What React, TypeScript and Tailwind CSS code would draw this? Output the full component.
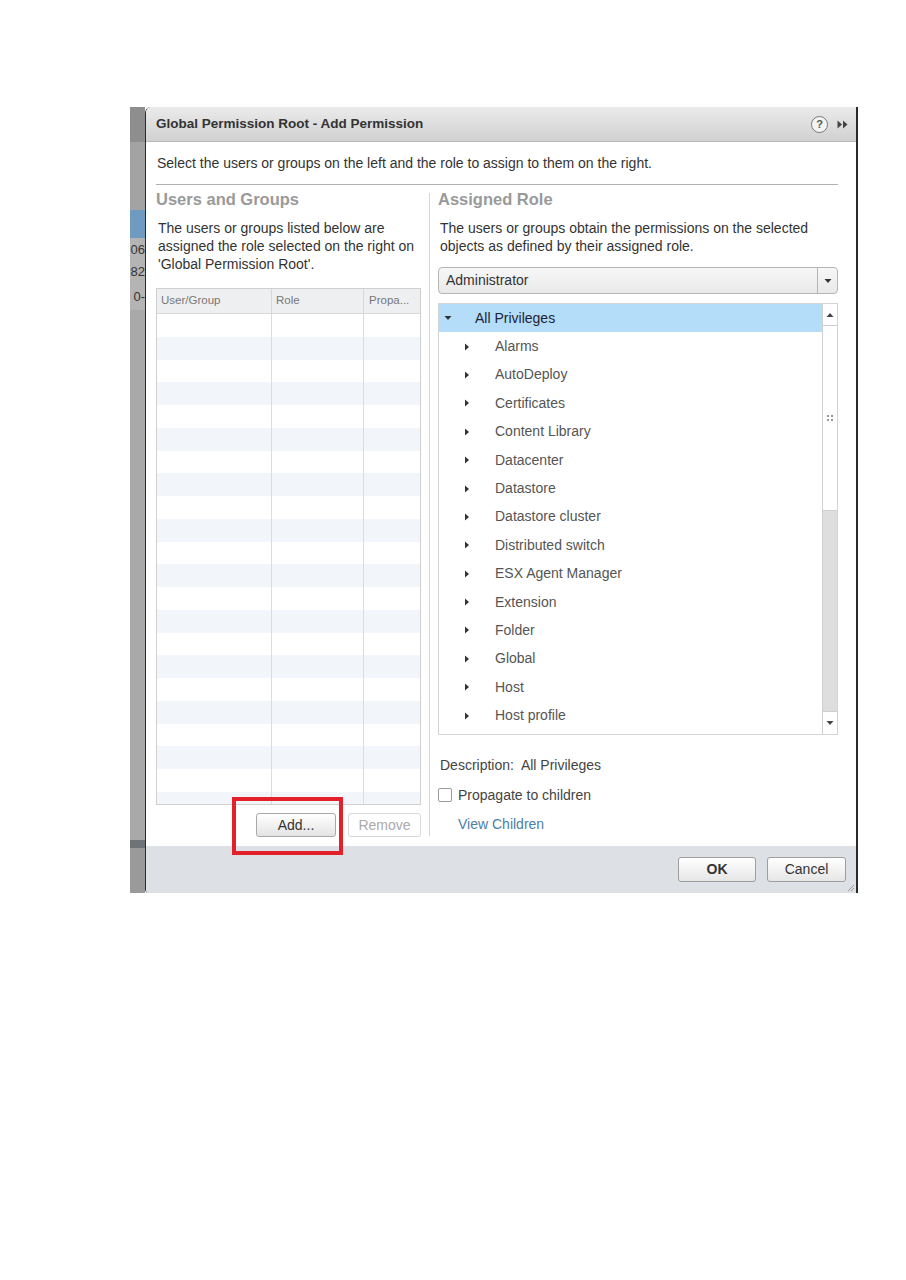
import React from 'react';

const PRIVILEGES = [
  'Alarms', 'AutoDeploy', 'Certificates', 'Content Library', 'Datacenter', 'Datastore',
  'Datastore cluster', 'Distributed switch', 'ESX Agent Manager', 'Extension', 'Folder',
  'Global', 'Host', 'Host profile',
];

function TriRight() {
  return (
    <svg width="6" height="8" viewBox="0 0 6 8" className="shrink-0">
      <path d="M1 0.5 L5 4 L1 7.5 Z" fill="#333" />
    </svg>
  );
}

function TriDown({ color = '#333' }: { color?: string }) {
  return (
    <svg width="8" height="6" viewBox="0 0 8 6" className="shrink-0">
      <path d="M0.5 1 L7.5 1 L4 5 Z" fill={color} />
    </svg>
  );
}

function TriUp() {
  return (
    <svg width="8" height="6" viewBox="0 0 8 6" className="shrink-0">
      <path d="M0.5 5 L7.5 5 L4 1 Z" fill="#444" />
    </svg>
  );
}

export default function App() {
  const rows = Array.from({ length: 22 });

  return (
    <div className="w-[906px] h-[1280px] bg-white font-['Liberation_Sans',Arial,sans-serif] text-[#333] overflow-hidden">
      <div className="ml-[130px] pt-[107px] flex w-[728px]">
        {/* app behind the dialog */}
        <div className="w-[15px] h-[786px] bg-[#a3a3a3] flex flex-col overflow-hidden text-[13px] leading-none text-[#333]">
          <div className="h-[35px] bg-[#8e8e8e]" />
          <div className="h-[68px]" />
          <div className="h-[28px] bg-[#6f9bc0]" />
          <div className="h-[22px] flex items-center justify-end bg-[#b4b4b4]">06</div>
          <div className="h-[22px] flex items-center justify-end bg-[#b4b4b4]">82</div>
          <div className="h-[28px] flex items-center justify-end bg-[#b4b4b4]">0-</div>
          <div className="h-[530px] bg-[#a9a9a9]" />
          <div className="h-[8px] bg-[#6e7378]" />
          <div className="flex-1 bg-[#9a9a9a]" />
        </div>

        {/* dialog */}
        <div className="w-[713px] h-[786px] flex flex-col border-l-[1.5px] border-r-2 border-[#2a2a2a] rounded-tl-[6px] rounded-bl-[4px] overflow-hidden bg-white">
          {/* title bar */}
          <div className="h-[35px] shrink-0 flex items-center pl-[10px] pr-[8px] bg-gradient-to-b from-[#ebebeb] to-[#d1d1d1] border-b border-[#b9b9b9]">
            <span className="text-[13.5px] font-bold text-[#333] flex-1">Global Permission Root - Add Permission</span>
            <span className="w-[17px] h-[17px] rounded-full border border-[#777] flex items-center justify-center text-[11px] font-bold text-[#555] bg-[#f4f4f4]">?</span>
            <span className="ml-[9px] flex items-center">
              <svg width="11" height="9" viewBox="0 0 11 9">
                <path d="M0.5 0.5 L5 4.5 L0.5 8.5 Z" fill="#444" />
                <path d="M6 0.5 L10.5 4.5 L6 8.5 Z" fill="#444" />
              </svg>
            </span>
          </div>

          {/* body */}
          <div className="flex-1 flex flex-col pl-[10px] pr-[18px] text-[14px]">
            <div className="h-[43px] shrink-0 flex items-center pl-[1px] text-[#333] border-b border-[#b0b0b0]">
              Select the users or groups on the left and the role to assign to them on the right.
            </div>

            <div className="flex flex-1">
              {/* left column */}
              <div className="w-[265px] shrink-0 flex flex-col">
                <div className="h-[28px] flex items-center text-[16.5px] font-bold text-[#9a9a9a] leading-none">Users and Groups</div>
                <div className="pt-[6px] leading-[18px] text-[#333] pl-[2px]">
                  The users or groups listed below are<br />
                  assigned the role selected on the right on<br />
                  'Global Permission Root'.
                </div>
                <div className="mt-[15px] h-[517px] border border-[#cfcfcf] flex flex-col overflow-hidden">
                  <div className="h-[25px] shrink-0 flex bg-[#eeeff1] border-b border-[#d8d8d8] text-[11.5px] text-[#777]">
                    <div className="w-[115px] border-r border-[#d8d8d8] flex items-center pl-[4px]">User/Group</div>
                    <div className="w-[92px] border-r border-[#d8d8d8] flex items-center pl-[4px]">Role</div>
                    <div className="flex-1 flex items-center pl-[5px]">Propa...</div>
                  </div>
                  <div className="flex-1 overflow-hidden">
                    {rows.map((_, i) => (
                      <div key={i} className={`h-[22.75px] flex ${i % 2 === 1 ? 'bg-[#f2f5f9]' : 'bg-white'}`}>
                        <div className="w-[115px] border-r border-[#dcdcdc]" />
                        <div className="w-[92px] border-r border-[#dcdcdc]" />
                        <div className="flex-1" />
                      </div>
                    ))}
                  </div>
                </div>
                <div className="mt-[8px] flex justify-end gap-[12px] relative">
                  <button className="w-[80px] h-[24px] rounded-[3px] border border-[#a9a9a9] bg-gradient-to-b from-[#ffffff] to-[#e4e4e4] text-[#333]">Add...</button>
                  <button className="w-[73px] h-[24px] rounded-[3px] border border-[#d9d9d9] bg-white text-[#aaa]">Remove</button>
                  {/* annotation box, drawn over the dialog footer */}
                  <div className="absolute z-10 left-[76px] top-[-16px] w-[111px] h-[58px] border-[4px] border-[#e3212b]" />
                </div>
              </div>

              {/* divider */}
              <div className="w-[17px] shrink-0 flex justify-center pt-[8px] pb-[10px]">
                <div className="w-px bg-[#d6d6d6]" />
              </div>

              {/* right column */}
              <div className="flex-1 flex flex-col">
                <div className="h-[28px] flex items-center text-[16.5px] font-bold text-[#9a9a9a] leading-none">Assigned Role</div>
                <div className="pt-[6px] leading-[18px] text-[#333] pl-[2px]">
                  The users or groups obtain the permissions on the selected<br />
                  objects as defined by their assigned role.
                </div>
                <div className="mt-[12px] h-[27px] flex rounded-[4px] border border-[#b5b5b5] bg-gradient-to-b from-[#f7f7f7] to-[#e9e9e9]">
                  <div className="flex-1 flex items-center pl-[7px] text-[#333]">Administrator</div>
                  <div className="w-[20px] border-l border-[#b5b5b5] flex items-center justify-center">
                    <TriDown />
                  </div>
                </div>

                <div className="mt-[9px] h-[432px] border border-[#d4d4d4] flex overflow-hidden">
                  <div className="flex-1 flex flex-col">
                    <div className="h-[28.4px] shrink-0 flex items-center bg-[#b3ddf8] pl-[5px] text-[#223]">
                      <TriDown />
                      <span className="ml-[23px]">All Privileges</span>
                    </div>
                    {PRIVILEGES.map((p) => (
                      <div key={p} className="h-[28.4px] shrink-0 flex items-center pl-[25px] text-[#555]">
                        <TriRight />
                        <span className="ml-[25px]">{p}</span>
                      </div>
                    ))}
                  </div>
                  {/* scrollbar */}
                  <div className="w-[15px] shrink-0 border-l border-[#cfcfcf] flex flex-col bg-[#f6f6f6]">
                    <div className="h-[22px] flex items-center justify-center border-b border-[#cfcfcf] bg-white">
                      <TriUp />
                    </div>
                    <div className="h-[185px] bg-white border-b border-[#d0d0d0] flex items-center justify-center">
                      <svg width="6" height="6" viewBox="0 0 6 6">
                        <rect x="0" y="0" width="2" height="2" fill="#999" />
                        <rect x="4" y="0" width="2" height="2" fill="#999" />
                        <rect x="0" y="4" width="2" height="2" fill="#999" />
                        <rect x="4" y="4" width="2" height="2" fill="#999" />
                      </svg>
                    </div>
                    <div className="flex-1 bg-[#dedede]" />
                    <div className="h-[23px] flex items-center justify-center border-t border-[#cfcfcf] bg-white">
                      <TriDown color="#444" />
                    </div>
                  </div>
                </div>

                <div className="mt-[21px] leading-[18px] pl-[2px] text-[#444]">Description:&nbsp; All Privileges</div>
                <label className="mt-[12px] h-[18px] flex items-center leading-[18px] text-[#444]">
                  <span className="w-[14px] h-[14px] border border-[#9a9a9a] rounded-[2px] bg-white mr-[6px]" />
                  Propagate to children
                </label>
                <div className="mt-[11px] leading-[18px] pl-[20px] text-[#4b7ea7]">View Children</div>
              </div>
            </div>
          </div>

          {/* footer */}
          <div className="h-[47px] shrink-0 bg-[#dde1e6] flex items-center justify-end pr-[10px] gap-[11px] relative text-[14px]">
            <button className="w-[78px] h-[25px] rounded-[3px] border border-[#9e9e9e] bg-gradient-to-b from-[#ffffff] to-[#e6e6e6] font-bold text-[#333]">OK</button>
            <button className="w-[79px] h-[25px] rounded-[3px] border border-[#9e9e9e] bg-gradient-to-b from-[#ffffff] to-[#e6e6e6] text-[#333]">Cancel</button>
            <svg width="8" height="8" viewBox="0 0 8 8" className="absolute right-[1px] bottom-[1px]">
              <path d="M7 1 L1 7 M7 4 L4 7" stroke="#999" strokeWidth="1" />
            </svg>
          </div>
        </div>
      </div>
    </div>
  );
}
